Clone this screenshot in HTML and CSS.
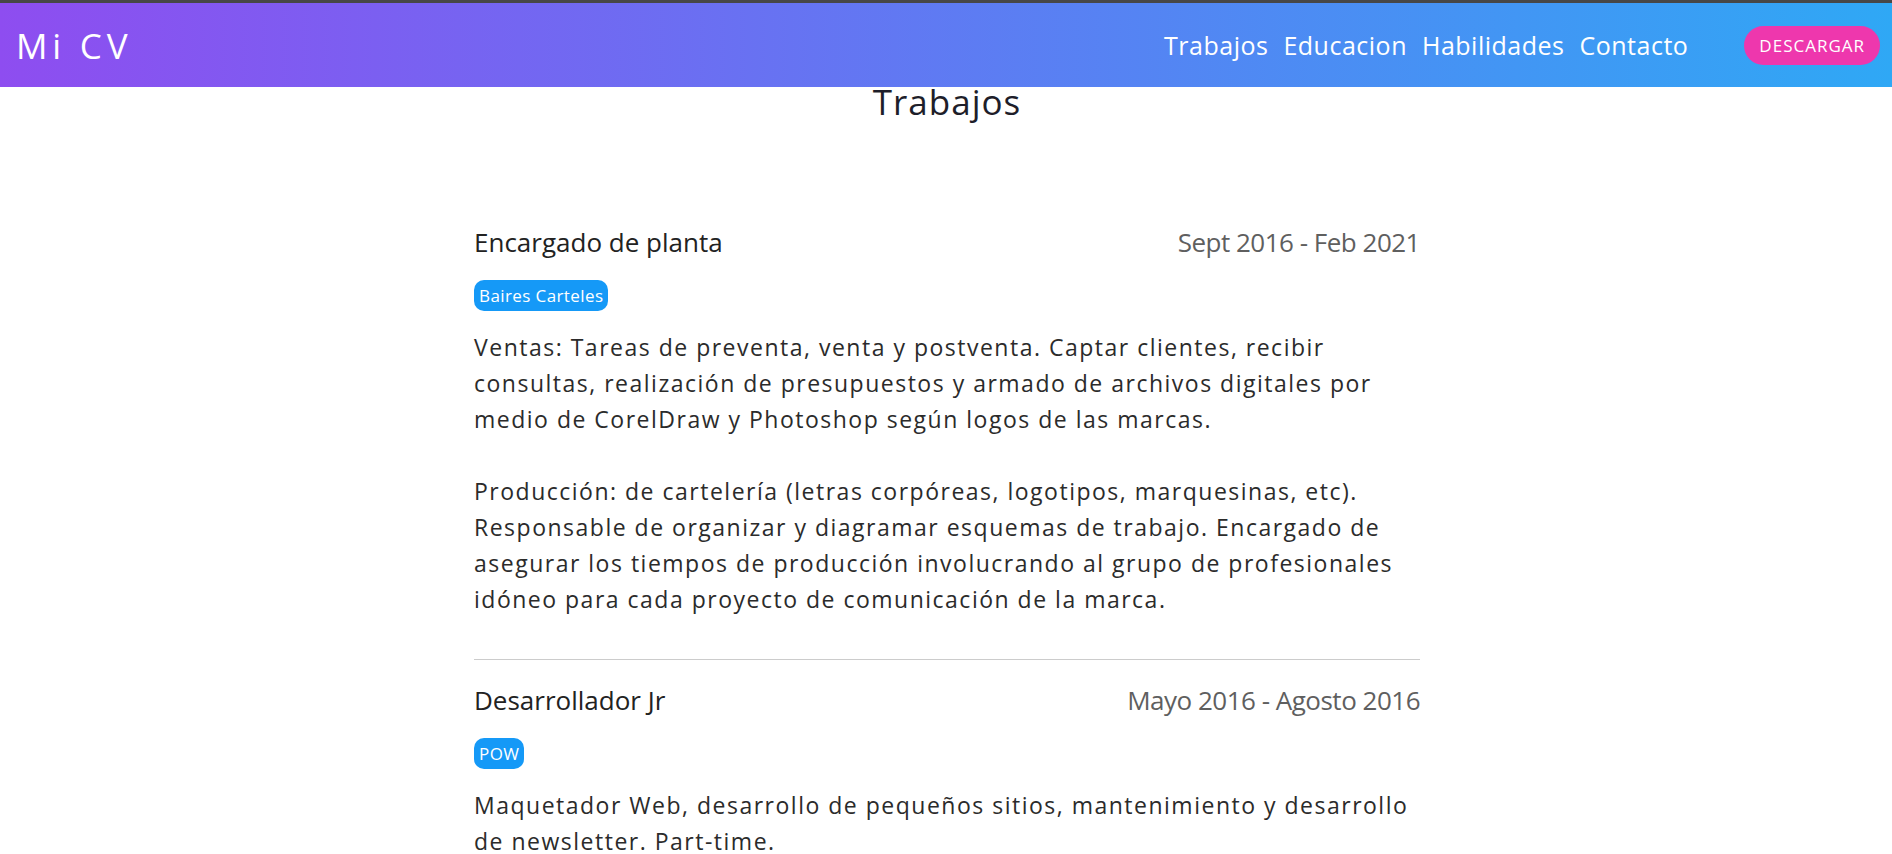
FILE: index.html
```html
<!DOCTYPE html>
<html lang="es">
<head>
<meta charset="utf-8">
<title>Mi CV</title>
<link rel="stylesheet" href="styles.css">
</head>
<body>
<header class="topbar">
  <a class="brand" href="#">Mi CV</a>
  <nav class="menu">
    <a class="menu-link" href="#trabajos">Trabajos</a>
    <a class="menu-link" href="#educacion">Educacion</a>
    <a class="menu-link" href="#habilidades">Habilidades</a>
    <a class="menu-link" href="#contacto">Contacto</a>
    <a class="btn-download" href="#">DESCARGAR</a>
  </nav>
</header>
<main class="section" id="trabajos">
  <h2 class="section-title">Trabajos</h2>
  <div class="jobs">
    <article class="job">
      <div class="job-head">
        <h3 class="job-title">Encargado de planta</h3>
        <span class="job-date">Sept 2016 - Feb 2021</span>
      </div>
      <span class="badge">Baires Carteles</span>
      <p class="job-text">Ventas: Tareas de preventa, venta y postventa. Captar clientes, recibir consultas, realización de presupuestos y armado de archivos digitales por medio de CorelDraw y Photoshop según logos de las marcas.<br><br>Producción: de cartelería (letras corpóreas, logotipos, marquesinas, etc). Responsable de organizar y diagramar esquemas de trabajo. Encargado de asegurar los tiempos de producción involucrando al grupo de profesionales idóneo para cada proyecto de comunicación de la marca.</p>
    </article>
    <article class="job">
      <div class="job-head">
        <h3 class="job-title">Desarrollador Jr</h3>
        <span class="job-date">Mayo 2016 - Agosto 2016</span>
      </div>
      <span class="badge">POW</span>
      <p class="job-text">Maquetador Web, desarrollo de pequeños sitios, mantenimiento y desarrollo de newsletter. Part-time.</p>
    </article>
  </div>
</main>
</body>
</html>
```
FILE: styles.css
```css
html, body {
  margin: 0;
  padding: 0;
}
body {
  font-family: "Open Sans", "Noto Sans", sans-serif;
  color: #2b2b2b;
  background: #ffffff;
}
a {
  text-decoration: none;
  color: inherit;
}
.topbar {
  position: relative;
  z-index: 2;
  height: 84px;
  border-top: 3px solid #474747;
  background: linear-gradient(90deg, #8e4df0 0%, #2fa8f5 100%);
  display: flex;
  align-items: center;
  justify-content: space-between;
  padding: 0 12px 0 16px;
  color: #ffffff;
}
.brand {
  font-size: 35px;
  letter-spacing: 4.8px;
  font-weight: 400;
  line-height: 1;
}
.menu {
  display: flex;
  align-items: center;
}
.menu-link {
  font-size: 25px;
  letter-spacing: 0.5px;
  margin-left: 15px;
  line-height: 1;
}
.btn-download {
  margin-left: 56px;
  height: 39px;
  padding: 0 15px;
  border-radius: 20px;
  background: #ee37ad;
  font-size: 17px;
  letter-spacing: 1px;
  display: flex;
  align-items: center;
}
.section {
  width: 946px;
  margin: 0 auto;
  padding-left: 2px;
}
.section-title {
  margin: 0;
  text-align: center;
  font-size: 35px;
  font-weight: 400;
  letter-spacing: 1px;
  line-height: 30px;
  color: #1e1e2a;
}
.jobs {
  margin-top: 107px;
}
.job {
  padding: 0 0 42px;
  border-bottom: 1px solid #cccccc;
}
.job + .job {
  padding-top: 22px;
}
.job-head {
  display: flex;
  justify-content: space-between;
  align-items: baseline;
  line-height: 36px;
}
.job-title {
  margin: 0;
  font-size: 26px;
  font-weight: 400;
  color: #222222;
}
.job-date {
  font-size: 26px;
  letter-spacing: -0.5px;
  color: #5f5f5f;
}
.badge {
  display: inline-block;
  margin-top: 20px;
  padding: 0 5px;
  line-height: 31px;
  border-radius: 10px;
  background: #1599f7;
  color: #ffffff;
  font-size: 17px;
  letter-spacing: 0.4px;
}
.job-text {
  margin: 18px 0 0;
  font-size: 23px;
  letter-spacing: 1.5px;
  line-height: 36px;
  color: #2b2b2b;
}
```
